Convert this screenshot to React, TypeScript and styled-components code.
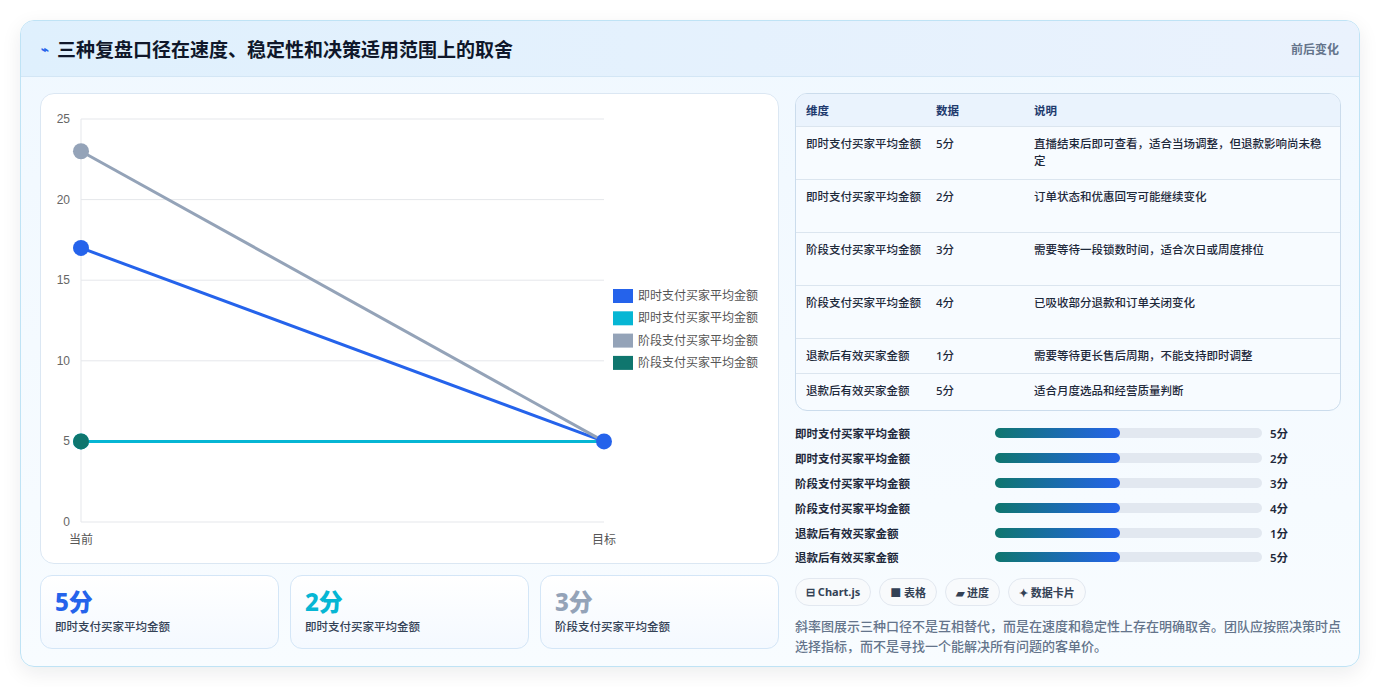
import React from "react";
import styled, { createGlobalStyle } from "styled-components";

const G = createGlobalStyle`
  body{margin:0;background:#fff;font-family:"Noto Sans","Noto Sans CJK SC",sans-serif;}
`;
const Page = styled.div`padding:20px 20px 20px 20px;`;
const Card = styled.div`
  width:1340px;height:647px;box-sizing:border-box;border:1px solid #bfe3f5;border-radius:14px;
  background:linear-gradient(180deg,#f0f8ff,#f8fcff);box-shadow:0 6px 20px rgba(15,23,42,.08);overflow:hidden;
`;
const Header = styled.div`
  height:56px;box-sizing:border-box;display:flex;align-items:center;justify-content:space-between;
  padding:0 20px 0 20px;background:linear-gradient(90deg,#dff0fd,#eaf2fd);border-bottom:1px solid #d3e6f5;
`;
const Title = styled.h1`margin:0;font-size:19px;font-weight:700;color:#0f172a;display:flex;align-items:center;gap:8px;
  span{color:#2563eb;font-size:13px;}`;
const Tag = styled.div`font-size:12px;font-weight:600;color:#64748b;`;
const Body = styled.div`display:grid;grid-template-columns:739px 546px;gap:16px;padding:16px 19px 0 19px;`;
const Col = styled.div`display:flex;flex-direction:column;`;
const ChartCard = styled.div`height:471px;background:#fff;border:1px solid #dbe7f3;border-radius:14px;box-sizing:border-box;`;
const Stats = styled.div`display:grid;grid-template-columns:repeat(3,1fr);gap:11px;margin-top:11px;`;
const Stat = styled.div`height:74px;box-sizing:border-box;border:1px solid #d4e6f7;border-radius:12px;
  background:linear-gradient(180deg,#fff,#f4f9ff);padding:10px 14px;`;
const StatV = styled.div<{c:string}>`font-size:24px;font-weight:800;color:${p=>p.c};line-height:32px;`;
const StatL = styled.div`font-size:11.5px;color:#334155;font-weight:500;`;
const Table = styled.div`border:1px solid #cbdcec;border-radius:12px;overflow:hidden;background:#f7fbff;`;
const Row = styled.div<{h:number;head?:boolean}>`display:grid;grid-template-columns:130px 98px 1fr;height:${p=>p.h}px;
  box-sizing:border-box;padding:8px 10px 0 10px;font-size:11.5px;line-height:17px;font-weight:500;color:#1e293b;
  background:${p=>p.head?"#eaf3fd":"transparent"};border-bottom:1px solid #dbe5ef;
  ${p=>p.head?"align-items:center;padding-top:0;color:#1e3a6e;font-weight:700;":""}
  &:last-child{border-bottom:none;}`;
const Bars = styled.div`display:flex;flex-direction:column;margin-top:10px;`;
const BarRow = styled.div`display:grid;grid-template-columns:200px 275px 1fr;align-items:center;height:24.8px;
  font-size:11.5px;font-weight:600;color:#1e293b;`;
const Track = styled.div`height:10px;border-radius:5px;background:#e2e8f0;margin-right:8px;`;
const Fill = styled.div`height:100%;border-radius:5px;background:linear-gradient(90deg,#0f766e,#2563eb);`;
const Chips = styled.div`display:flex;gap:8px;margin-top:8px;`;
const Chip = styled.div`height:28px;box-sizing:border-box;padding:0 10px;border:1px solid #e2e8f0;border-radius:14px;
  display:flex;align-items:center;gap:4px;font-size:11px;font-weight:700;color:#334155;background:#f8fafc;`;
const Note = styled.p`margin:10px 0 0;font-size:13px;line-height:20px;color:#64748b;font-weight:500;`;

const rows = [
  ["即时支付买家平均金额","5分","直播结束后即可查看，适合当场调整，但退款影响尚未稳定",53],
  ["即时支付买家平均金额","2分","订单状态和优惠回写可能继续变化",53],
  ["阶段支付买家平均金额","3分","需要等待一段锁数时间，适合次日或周度排位",53],
  ["阶段支付买家平均金额","4分","已吸收部分退款和订单关闭变化",53],
  ["退款后有效买家金额","1分","需要等待更长售后周期，不能支持即时调整",35],
  ["退款后有效买家金额","5分","适合月度选品和经营质量判断",36],
] as const;

const Chart = () => {
  const x0=40,x1=563,y=(v:number)=>428-v*16.12;
  const ticks=[0,5,10,15,20,25];
  const series=[{c:"#94a3b8",a:23},{c:"#2563eb",a:17},{c:"#06b6d4",a:5},{c:"#0f766e",a:5}];
  const leg=[["#2563eb","即时支付买家平均金额"],["#06b6d4","即时支付买家平均金额"],["#94a3b8","阶段支付买家平均金额"],["#0f766e","阶段支付买家平均金额"]];
  return (
    <svg width="737" height="469" style={{display:"block"}}>
      {ticks.map(t=>(<g key={t}>
        <line x1={x0} x2={x1} y1={y(t)} y2={y(t)} stroke="#e5e7eb"/>
        <text x={x0-11} y={y(t)+4} fontSize="12" fill="#666" textAnchor="end" fontFamily="Liberation Sans">{t}</text>
      </g>))}
      <line x1={x0} x2={x0} y1={y(25)} y2={y(0)} stroke="#e5e7eb"/>
      <text x={x0} y={450} fontSize="12" fill="#555" textAnchor="middle">当前</text>
      <text x={x1} y={450} fontSize="12" fill="#555" textAnchor="middle">目标</text>
      {[series[3],series[2],series[1],series[0]].map((s,i)=>(<g key={i}>
        <line x1={x0} y1={y(s.a)} x2={x1} y2={y(5)} stroke={s.c} strokeWidth="3"/>
      </g>))}
      {series.map((s,i)=>(<circle key={i} cx={x0} cy={y(s.a)} r="8" fill={s.c}/>))}
      <circle cx={x1} cy={y(5)} r="8" fill="#2563eb"/>
      {leg.map(([c,l],i)=>(<g key={i}>
        <rect x={572} y={195+i*22.3} width="20" height="14" fill={c as string}/>
        <text x={597} y={206+i*22.3} fontSize="12" fill="#555">{l}</text>
      </g>))}
    </svg>
  );
};

export default function App(){
  return (<Page><G/><Card>
    <Header><Title><span>⌁</span>三种复盘口径在速度、稳定性和决策适用范围上的取舍</Title><Tag>前后变化</Tag></Header>
    <Body>
      <Col>
        <ChartCard><Chart/></ChartCard>
        <Stats>
          <Stat><StatV c="#2563eb">5分</StatV><StatL>即时支付买家平均金额</StatL></Stat>
          <Stat><StatV c="#06b6d4">2分</StatV><StatL>即时支付买家平均金额</StatL></Stat>
          <Stat><StatV c="#94a3b8">3分</StatV><StatL>阶段支付买家平均金额</StatL></Stat>
        </Stats>
      </Col>
      <Col>
        <Table>
          <Row h={33} head><div>维度</div><div>数据</div><div>说明</div></Row>
          {rows.map((r,i)=>(<Row key={i} h={r[3]}><div>{r[0]}</div><div>{r[1]}</div><div>{r[2]}</div></Row>))}
        </Table>
        <Bars>
          {rows.map((r,i)=>(<BarRow key={i}><div>{r[0]}</div><Track><Fill style={{width:"47%"}}/></Track><div>{r[1]}</div></BarRow>))}
        </Bars>
        <Chips><Chip>⊟ Chart.js</Chip><Chip>■ 表格</Chip><Chip>▰ 进度</Chip><Chip>✦ 数据卡片</Chip></Chips>
        <Note>斜率图展示三种口径不是互相替代，而是在速度和稳定性上存在明确取舍。团队应按照决策时点选择指标，而不是寻找一个能解决所有问题的客单价。</Note>
      </Col>
    </Body>
  </Card></Page>);
}
